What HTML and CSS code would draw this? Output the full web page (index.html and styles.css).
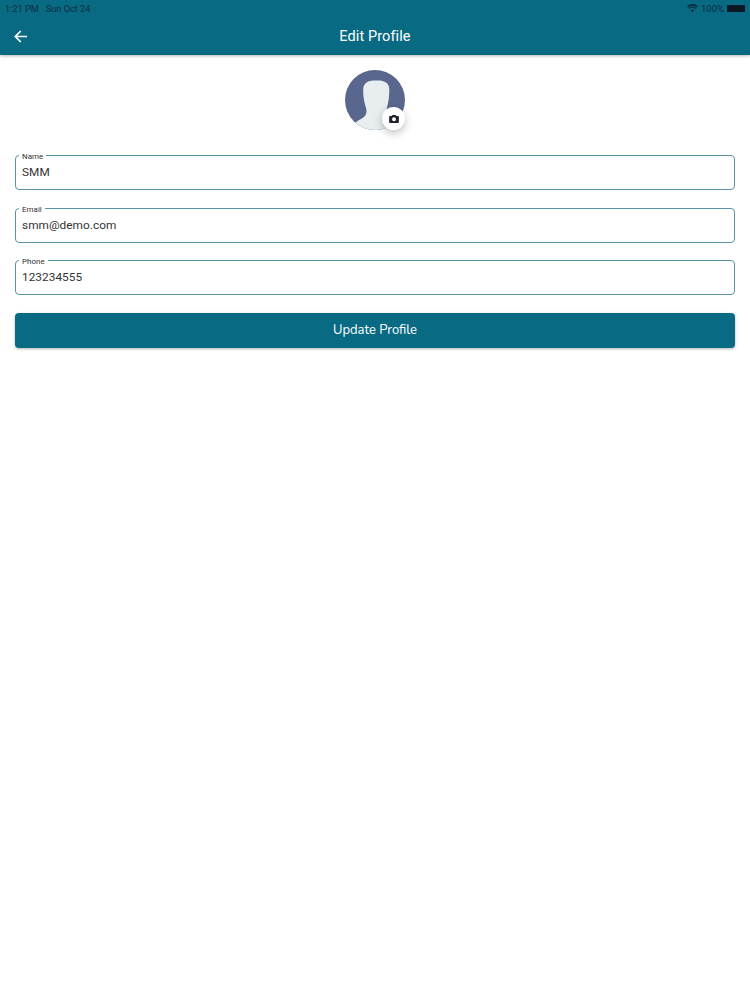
FILE: index.html
```html
<!DOCTYPE html>
<html lang="en">
<head>
<meta charset="utf-8">
<title>Edit Profile</title>
<link rel="stylesheet" href="styles.css">
</head>
<body>
<header class="appbar">
  <div class="status">
    <span class="status-time">1:21 PM</span>
    <span class="status-date">Sun Oct 24</span>
    <span class="status-right">
      <svg class="wifi" width="11" height="8" viewBox="0 0 12 9"><path d="M6 9 L4.200 6.900 A2.800 2.800 0 0 1 7.800 6.900 Z M2.900 5.600 L1.800 4.400 A6 6 0 0 1 10.200 4.400 L9.100 5.600 A4.400 4.400 0 0 0 2.900 5.600 Z M1.100 3.700 L0 2.500 A8.600 8.600 0 0 1 12 2.500 L10.900 3.700 A7 7 0 0 0 1.100 3.700 Z" fill="#0b2233"/></svg>
      <span class="status-pct">100%</span>
      <span class="battery"></span>
    </span>
  </div>
  <div class="toolbar">
    <svg class="back" width="14" height="13" viewBox="0 0 14 13"><path d="M13 6.500H1.800M6.800 1 1.300 6.500l5.500 5.500" fill="none" stroke="#fff" stroke-width="1.700"/></svg>
    <h1 class="title">Edit Profile</h1>
  </div>
</header>
<main class="content">
  <div class="avatar-wrap">
    <svg class="avatar" width="60" height="60" viewBox="0 0 60 60">
      <defs><clipPath id="disc"><circle cx="30" cy="30" r="30"/></clipPath></defs>
      <circle cx="30" cy="30" r="30" fill="#59678f"/>
      <g clip-path="url(#disc)">
        <path d="M30 10.500c-7 0-11.500 2.500-11.800 8.500-.2 5 .6 11 1.800 15.500.7 2.500 1.500 4 1.500 7 0 3.500-2 5.500-5.500 7.500-2.500 1.500-4.500 2.500-6.500 4.500l5 6.500h38V50c-4-1.500-7.500-3.500-9.500-5.500-1.500-1.500-2-4-1-7 1.500-5 2.300-11 2.300-18 0-6.500-4.800-9-11.300-9z" fill="#e8eeef"/>
      </g>
    </svg>
    <span class="camera-badge">
      <svg width="10" height="8" viewBox="0 0 11 9"><path d="M3.700 0h3.600l.9 1.200H10a1 1 0 0 1 1 1V8a1 1 0 0 1-1 1H1a1 1 0 0 1-1-1V2.200a1 1 0 0 1 1-1h1.800zM5.500 2.600a2.200 2.200 0 1 0 0 4.400 2.200 2.200 0 0 0 0-4.400z" fill="#20232a"/></svg>
    </span>
  </div>
  <form class="form">
    <div class="field"><label class="field-label">Name</label><div class="field-value">SMM</div></div>
    <div class="field"><label class="field-label">Email</label><div class="field-value">smm@demo.com</div></div>
    <div class="field"><label class="field-label">Phone</label><div class="field-value">123234555</div></div>
    <button class="submit" type="button">Update Profile</button>
  </form>
</main>
</body>
</html>
```

FILE: styles.css
```css
* { box-sizing: border-box; }
html, body { margin: 0; height: 100%; background: #fff; }
body { font-family: Roboto, "Liberation Sans", sans-serif; overflow: hidden; }

.appbar {
  height: 55px;
  background: #096a84;
  box-shadow: 0 1px 3px rgba(0, 0, 0, 0.3);
  display: flex;
  flex-direction: column;
}
.status {
  height: 15px;
  padding: 1px 5px 0 5px;
  display: flex;
  align-items: center;
  font-size: 9.200px;
  color: #0b2c42;
}
.status-date { margin-left: 7px; }
.status-right { margin-left: auto; display: flex; align-items: center; gap: 3px; }
.status-pct { font-size: 9.500px; }
.battery { width: 18px; height: 7px; background: #081722; border-radius: 1px; }
.toolbar {
  flex: 1;
  position: relative;
  display: flex;
  align-items: center;
  justify-content: center;
  padding-top: 2px;
}
.back { position: absolute; left: 14px; top: 15px; }
.title {
  margin: 0;
  font-size: 14.500px;
  font-weight: 400;
  color: #fff;
  letter-spacing: 0.1px;
}

.content { padding: 15px 15px 0; }
.avatar-wrap { position: relative; width: 60px; height: 60px; margin: 0 auto; }
.avatar { display: block; }
.camera-badge {
  position: absolute;
  left: 37px;
  top: 37px;
  width: 23px;
  height: 23px;
  border-radius: 50%;
  background: #fff;
  box-shadow: 0 3px 8px rgba(0, 0, 0, 0.25);
  display: flex;
  align-items: center;
  justify-content: center;
}

.form { margin-top: 25px; display: flex; flex-direction: column; gap: 17.500px; }
.field {
  position: relative;
  height: 35px;
  border: 1px solid #5893a7;
  border-radius: 4px;
  padding: 8px 6px 0;
}
.field-label {
  position: absolute;
  left: 3px;
  top: -4px;
  padding: 0 3px;
  background: #fff;
  font-size: 8px;
  line-height: 9px;
  color: #333;
}
.field-value { font-size: 11.800px; line-height: 16px; color: #333; letter-spacing: 0.05px; }
.submit {
  height: 35px;
  padding: 0 0 1px;
  border: 0;
  border-radius: 4px;
  background: #096a84;
  box-shadow: 0 1px 3px rgba(0, 0, 0, 0.3);
  color: #fff;
  font-family: "Nunito", Lato, sans-serif;
  font-size: 13px;
}
```
